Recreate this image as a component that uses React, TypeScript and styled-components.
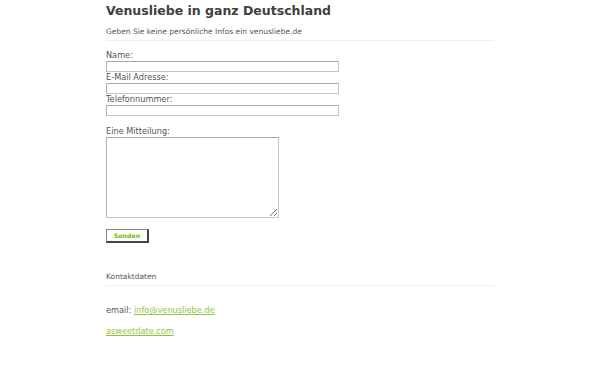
import React from "react";
import styled, { createGlobalStyle } from "styled-components";

const GlobalStyle = createGlobalStyle`
  html, body {
    margin: 0;
    padding: 0;
    background: #ffffff;
  }
  body {
    font-family: "DejaVu Sans", Verdana, sans-serif;
    color: #555555;
  }
`;

const Page = styled.div`
  width: 388px;
  padding: 3px 0 0 106px;
  display: flex;
  flex-direction: column;
  align-items: flex-start;
`;

const Title = styled.h1`
  margin: 0;
  font-size: 12.5px;
  line-height: 15px;
  font-weight: bold;
  color: #404040;
  white-space: nowrap;
`;

const SectionHead = styled.div<{ $top: number }>`
  align-self: stretch;
  margin-top: ${(p) => p.$top}px;
  padding-bottom: 3px;
  border-bottom: 1px solid #eef3df;
  font-size: 7.5px;
  line-height: 10px;
  color: #555555;
`;

const Form = styled.form`
  display: flex;
  flex-direction: column;
  align-items: flex-start;
  margin-top: 9px;
`;

const Label = styled.label<{ $gap?: number }>`
  display: block;
  margin-top: ${(p) => p.$gap ?? 0}px;
  font-size: 8.2px;
  line-height: 11px;
  color: #555555;
`;

const TextInput = styled.input`
  box-sizing: border-box;
  width: 233px;
  height: 11px;
  margin: 0;
  padding: 0 2px;
  border: 1px solid #c6c6c6;
  border-top-color: #a6a6a6;
  border-left-color: #b2b2b2;
  background: #ffffff;
  font-size: 8px;
`;

const MessageBox = styled.textarea`
  box-sizing: border-box;
  width: 173px;
  height: 81px;
  margin: 0;
  padding: 2px;
  border: 1px solid #c6c6c6;
  border-top-color: #a6a6a6;
  border-left-color: #b2b2b2;
  background: #ffffff;
  font-size: 8px;
  font-family: "DejaVu Sans", sans-serif;
`;

const SendButton = styled.button`
  box-sizing: border-box;
  width: 43px;
  height: 14px;
  margin-top: 11px;
  padding: 0;
  background: #ffffff;
  border-style: solid;
  border-width: 1px 2px 2px 1px;
  border-color: #8a8a8a #444444 #444444 #8a8a8a;
  font-family: "DejaVu Sans", sans-serif;
  font-size: 6.2px;
  line-height: 10px;
  font-weight: bold;
  color: #72b800;
  cursor: pointer;
`;

const Line = styled.p<{ $top: number }>`
  margin: ${(p) => p.$top}px 0 0 0;
  font-size: 8.2px;
  line-height: 11px;
  color: #555555;
`;

const Link = styled.a`
  color: #8cc63f;
  text-decoration: underline;
`;

export default function App() {
  return (
    <>
      <GlobalStyle />
      <Page>
        <Title>Venusliebe in ganz Deutschland</Title>
        <SectionHead $top={9}>
          Geben Sie keine persönliche Infos ein venusliebe.de
        </SectionHead>
        <Form onSubmit={(e) => e.preventDefault()}>
          <Label htmlFor="name">Name:</Label>
          <TextInput id="name" type="text" />
          <Label htmlFor="email">E-Mail Adresse:</Label>
          <TextInput id="email" type="text" />
          <Label htmlFor="phone">Telefonnummer:</Label>
          <TextInput id="phone" type="text" />
          <Label htmlFor="msg" $gap={10}>
            Eine Mitteilung:
          </Label>
          <MessageBox id="msg" />
          <SendButton type="submit">Senden</SendButton>
        </Form>
        <SectionHead $top={29}>Kontaktdaten</SectionHead>
        <Line $top={19}>
          email: <Link href="#">info@venusliebe.de</Link>
        </Line>
        <Line $top={10}>
          <Link href="#">asweetdate.com</Link>
        </Line>
      </Page>
    </>
  );
}
